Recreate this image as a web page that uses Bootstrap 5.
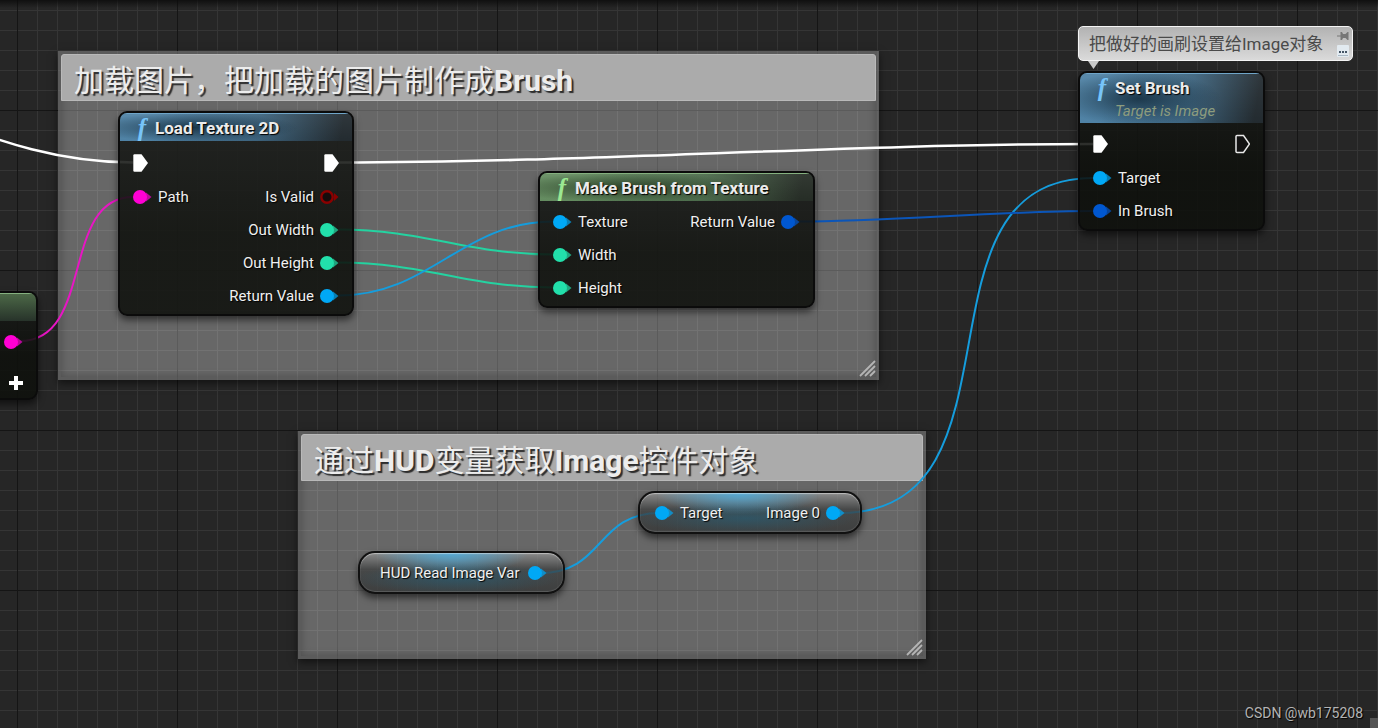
<!DOCTYPE html>
<html lang="zh-CN">
<head>
<meta charset="utf-8">
<meta name="viewport" content="width=device-width, initial-scale=1">
<title>Blueprint Graph</title>
<link href="https://cdn.jsdelivr.net/npm/bootstrap@5.3.0/dist/css/bootstrap.min.css" rel="stylesheet">
<style>
  body { font-family: Roboto, "Noto Sans CJK SC", sans-serif; font-size: 15px; line-height: 20px; color: #f0f0f0; background: #262626; }
  .graph {
    min-height: 100vh; background-color: #262626;
    background-image:
      linear-gradient(#0a0a0acc, transparent 8px),
      linear-gradient(90deg, #151515 1px, transparent 1px),
      linear-gradient(#151515 1px, transparent 1px),
      linear-gradient(90deg, #353535 1px, transparent 1px),
      linear-gradient(#353535 1px, transparent 1px);
    background-size: 100% 100%, 160px 160px, 160px 160px, 20px 20px, 20px 20px;
    background-position: 0 0, 17px 0, 0 110px, 17px 0, 0 10px;
  }
  .wires { left: 0; top: 0; width: 100%; height: 100%; fill: none; stroke-width: 2; }

  /* comment frames */
  .frame { background: rgba(255,255,255,.3); border: 3px solid rgba(70,70,70,.35); box-shadow: 0 3px 8px rgba(0,0,0,.55), inset 0 0 8px rgba(0,0,0,.25); }
  .frame-title { height: 47px; padding: 0 12px; background: #ababab; border: 1px solid #b9b9b9; border-radius: 3px 3px 0 0; font-size: 30px; line-height: 52px; font-weight: 400; color: #ededed; text-shadow: 2px 2px 1px #2c2c2c; }
  .grip { right: 0; bottom: 0; width: 17px; height: 17px; }
  .frame-load { left: 58px; top: 51px; width: 821px; height: 329px; }
  .frame-hud { left: 298px; top: 431px; width: 628px; height: 228px; }

  /* function nodes */
  .node { background: linear-gradient(rgba(24,26,24,.88), rgba(14,16,12,.88) 60%); border: 2px solid #0b0b0b; border-radius: 9px; box-shadow: 0 4px 7px rgba(0,0,0,.55); overflow: hidden; padding-bottom: 2px; }
  .node-head { padding: 0 14px; height: 28px; gap: 5px; border-top: 1px solid #6fa5c8; }
  .head-blue { background: radial-gradient(ellipse 45% 55% at 32% 50%, rgba(20,45,62,.85), transparent), linear-gradient(rgba(255,255,255,.06), transparent), linear-gradient(100deg, #4f82a5 15%, #3c627c 60%, #232b30 95%); }
  .head-green { border-top-color: #85b07f; background: radial-gradient(ellipse 45% 55% at 32% 50%, rgba(35,55,32,.85), transparent), linear-gradient(rgba(255,255,255,.06), transparent), linear-gradient(100deg, #648c60 15%, #4b6a4b 60%, #262d26 95%); }
  .n-append .head-green { background: linear-gradient(#4c6847, #27332a); }
  .node-head h2 { font-size: 17px; line-height: 29px; font-weight: 700; color: #ececec; text-shadow: 1px 1px 1px #000; white-space: nowrap; }
  .node-head p { line-height: 16px; font-style: italic; color: #8d9c7e; white-space: nowrap; }
  .fn { width: 16px; font: italic bold 25px/27px "Liberation Serif", serif; color: #77c4f8; text-align: center; }
  .head-green .fn { color: #9be892; }
  .pins { padding: 4px 13px 0; }
  .n-load .pins { padding-top: 5px; }
  .pin-row { height: 33px; text-shadow: 1px 1px 1px #000; white-space: nowrap; }
  .exec-row { height: 34px; }
  .pin { width: 19px; height: 20px; flex: none; }
  .pin-label { gap: 6px; }
  .n-load { left: 118px; top: 111px; width: 236px; }
  .n-make { left: 538px; top: 171px; width: 277px; }
  .n-set { left: 1078px; top: 71px; width: 187px; }
  .n-set .node-head { height: 50px; }
  .n-append { left: -122px; top: 291px; width: 160px; height: 109px; }

  /* variable nodes */
  .pill { height: 43px; padding: 0 15px; border: 2px solid #111; border-radius: 17px; text-shadow: 1px 1px 1px #000; white-space: nowrap;
    background: radial-gradient(ellipse 38% 55% at 45% 0, rgba(75,175,225,.85), transparent), radial-gradient(ellipse 50% 40% at 48% 65%, rgba(30,100,130,.5), transparent), linear-gradient(rgba(150,150,150,.75), rgba(60,62,62,.75) 42%, rgba(48,50,50,.75));
    box-shadow: 0 4px 7px rgba(0,0,0,.55), inset 0 1px 1px rgba(255,255,255,.45), inset 0 -1px 1px rgba(255,255,255,.15); }
  .v-image { left: 638px; top: 491px; width: 224px; }
  .v-hud { left: 358px; top: 551px; width: 207px; padding: 0 16px 0 20px; }

  /* note bubble */
  .note { left: 1078px; top: 26px; width: 275px; height: 35px; padding: 0 3px 0 10px; border: 1px solid #f4f4f4; border-radius: 5px; background: linear-gradient(#b2b2b2, #dadada); color: #4a4a4a; font-size: 17px; white-space: nowrap; }
  .note-tail { left: 9px; top: 34px; width: 12px; height: 8px; }
  .note button { line-height: 0; }
  .watermark { right: 15px; bottom: 5px; font-size: 14px; color: #b4b4b4; text-shadow: 1px 1px 1px #000; }
  .corner { right: 0; bottom: 0; width: 8px; height: 10px; background: #555; }
</style>
</head>
<body>
<svg class="d-none">
  <symbol id="pin" viewBox="0 0 19 20"><path d="M13 5.500 18.500 10 13 14.500z" fill="currentColor" opacity=".7"/><circle cx="7" cy="10" r="7" fill="currentColor"/></symbol>
  <symbol id="pin-open" viewBox="0 0 19 20"><circle cx="7" cy="10" r="5.700" fill="#140c0c" stroke="currentColor" stroke-width="2.400"/><path d="M14 6 18.500 10 14 14z" fill="currentColor"/></symbol>
  <symbol id="exec" viewBox="0 0 19 20"><path d="M.3 2.500q0-1.200 1.200-1.200H8.500L15 10l-6.500 8.700H1.500Q.3 18.700.3 17.500z" fill="#fff"/></symbol>
  <symbol id="exec-open" viewBox="0 0 19 20"><path d="M1 2.500q0-1 1-1H8.500L14.500 10l-6 8.500H2q-1 0-1-1z" fill="#111" stroke="#e8e8e8" stroke-width="1.500"/></symbol>
  <symbol id="grip" viewBox="0 0 17 17"><path d="M1 16 16 1M6 16 16 6M11 16 16 11" stroke="#b4b4b4" stroke-width="1.800"/></symbol>
</svg>

<main class="graph position-relative overflow-hidden">
  <section class="frame frame-load position-absolute">
    <h1 class="frame-title m-0">加载图片，把加载的图片制作成<b>Brush</b></h1>
    <svg class="grip position-absolute"><use href="#grip"/></svg>
  </section>
  <section class="frame frame-hud position-absolute">
    <h1 class="frame-title m-0">通过<b>HUD</b>变量获取<b>Image</b>控件对象</h1>
    <svg class="grip position-absolute"><use href="#grip"/></svg>
  </section>

  <svg class="wires position-absolute">
    <g stroke="#fff" stroke-width="2.500">
      <path d="M-60 118C0 142 60 162.500 133 162.500"/>
      <path d="M339 162.500C590 162.500 842 144 1093 144"/>
    </g>
    <path stroke="#e815c4" d="M20 341C95 341 60 197 133 197"/>
    <g stroke="#24d3a1">
      <path d="M339 229.500C425 229.500 467 254.500 553 254.500"/>
      <path d="M339 262.500C425 262.500 467 287.500 553 287.500"/>
    </g>
    <g stroke="#159ddd">
      <path d="M339 295.500C430 295.500 462 221.500 553 221.500"/>
      <path d="M840 513C1035 513 903 178 1093 178"/>
      <path d="M540 573C605 573 595 513 660 513"/>
    </g>
    <path stroke="#0b55b8" d="M797 221.500C890 221.500 1000 211 1093 211"/>
  </svg>

  <article class="node n-append position-absolute">
    <header class="node-head head-green"></header>
    <div class="pins">
      <div class="pin-row d-flex justify-content-end align-items-center"><svg class="pin" color="#ff00d4"><use href="#pin"/></svg></div>
      <div class="d-flex justify-content-end pt-3">
        <button class="btn p-0 border-0 lh-1" type="button" aria-label="Add pin"><svg class="d-block" width="19" height="18"><path d="M12 2v14M5 9h14" stroke="#fff" stroke-width="4"/></svg></button>
      </div>
    </div>
  </article>

  <article class="node n-load position-absolute">
    <header class="node-head head-blue d-flex"><span class="fn">f</span><h2 class="m-0">Load Texture 2D</h2></header>
    <div class="pins">
      <div class="pin-row exec-row d-flex justify-content-between align-items-center"><svg class="pin"><use href="#exec"/></svg><svg class="pin"><use href="#exec" x="4"/></svg></div>
      <div class="pin-row d-flex justify-content-between align-items-center">
        <span class="pin-label d-flex align-items-center"><svg class="pin" color="#ff00d4"><use href="#pin"/></svg>Path</span>
        <span class="pin-label d-flex align-items-center">Is Valid<svg class="pin" color="#8a0000"><use href="#pin-open"/></svg></span>
      </div>
      <div class="pin-row pin-label d-flex justify-content-end align-items-center">Out Width<svg class="pin" color="#22e0ab"><use href="#pin"/></svg></div>
      <div class="pin-row pin-label d-flex justify-content-end align-items-center">Out Height<svg class="pin" color="#22e0ab"><use href="#pin"/></svg></div>
      <div class="pin-row pin-label d-flex justify-content-end align-items-center">Return Value<svg class="pin" color="#00a8f6"><use href="#pin"/></svg></div>
    </div>
  </article>

  <article class="node n-make position-absolute">
    <header class="node-head head-green d-flex"><span class="fn">f</span><h2 class="m-0">Make Brush from Texture</h2></header>
    <div class="pins">
      <div class="pin-row d-flex justify-content-between align-items-center">
        <span class="pin-label d-flex align-items-center"><svg class="pin" color="#00a8f6"><use href="#pin"/></svg>Texture</span>
        <span class="pin-label d-flex align-items-center">Return Value<svg class="pin" color="#0057d0"><use href="#pin"/></svg></span>
      </div>
      <div class="pin-row pin-label d-flex align-items-center"><svg class="pin" color="#22e0ab"><use href="#pin"/></svg>Width</div>
      <div class="pin-row pin-label d-flex align-items-center"><svg class="pin" color="#22e0ab"><use href="#pin"/></svg>Height</div>
    </div>
  </article>

  <article class="node n-set position-absolute">
    <header class="node-head head-blue d-flex"><span class="fn">f</span><div><h2 class="m-0">Set Brush</h2><p class="m-0">Target is Image</p></div></header>
    <div class="pins">
      <div class="pin-row exec-row d-flex justify-content-between align-items-center"><svg class="pin"><use href="#exec"/></svg><svg class="pin"><use href="#exec-open" x="4"/></svg></div>
      <div class="pin-row pin-label d-flex align-items-center"><svg class="pin" color="#00a8f6"><use href="#pin"/></svg>Target</div>
      <div class="pin-row pin-label d-flex align-items-center"><svg class="pin" color="#0057d0"><use href="#pin"/></svg>In Brush</div>
    </div>
  </article>

  <article class="pill v-image position-absolute d-flex justify-content-between align-items-center">
    <span class="pin-label d-flex align-items-center"><svg class="pin" color="#00a8f6"><use href="#pin"/></svg>Target</span>
    <span class="pin-label d-flex align-items-center">Image 0<svg class="pin" color="#00a8f6"><use href="#pin"/></svg></span>
  </article>
  <article class="pill v-hud position-absolute d-flex justify-content-between align-items-center">HUD Read Image Var<svg class="pin" color="#00a8f6"><use href="#pin"/></svg></article>

  <aside class="note position-absolute d-flex justify-content-between align-items-center">
    <span>把做好的画刷设置给Image对象</span>
    <div class="d-flex flex-column gap-1">
      <button class="btn p-0 border-0" type="button" aria-label="Pin"><svg width="12" height="10"><path d="M0 4.500h4v1H0zM3.500 1h1.500L6 3h2.500L10.500 1H11.500v8h-1L8.500 7H6L5 9H3.500z" fill="#777"/></svg></button>
      <button class="btn p-0 border-0" type="button" aria-label="Toggle bubble"><svg width="12" height="12"><rect width="12" height="12" rx="1" fill="#e2eaf0"/><path d="M2 7h2M5 7h2M8 7h2" stroke="#456" stroke-width="2"/><path d="M1 10.500h10" stroke="#a9b8c4"/></svg></button>
    </div>
    <svg class="note-tail position-absolute"><path d="M0 0h11L5.500 8z" fill="#c8c8c8"/></svg>
  </aside>

  <div class="watermark position-absolute">CSDN @wb175208</div>
  <div class="corner position-absolute"></div>
</main>
<script src="https://cdn.jsdelivr.net/npm/bootstrap@5.3.0/dist/js/bootstrap.bundle.min.js"></script>
</body>
</html>
